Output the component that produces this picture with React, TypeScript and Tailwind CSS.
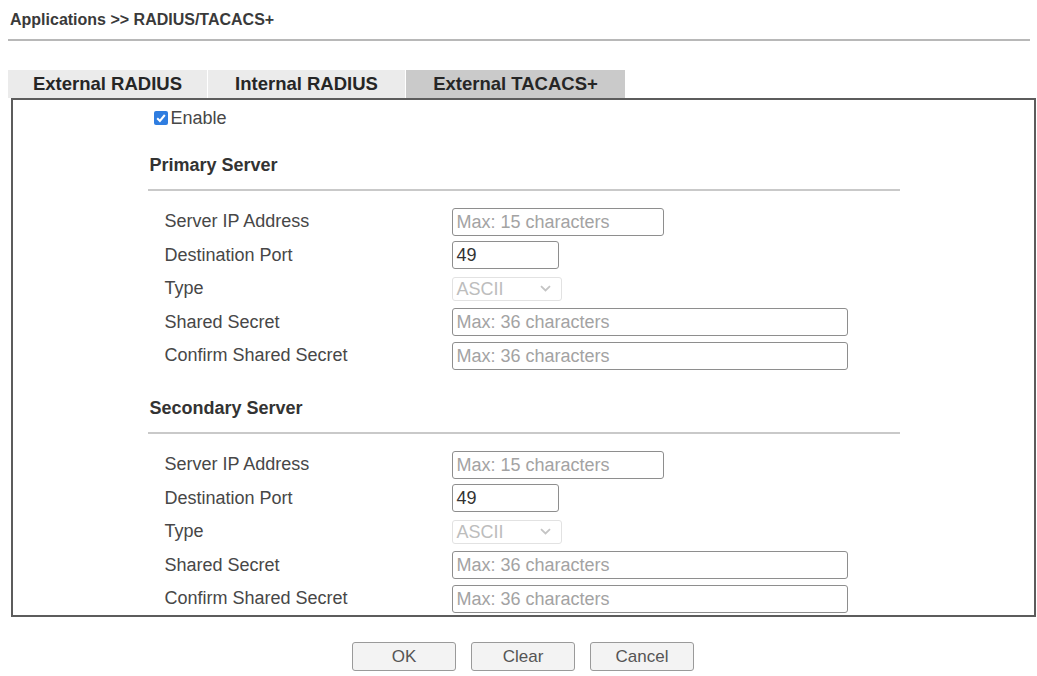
import React from "react";

type Row = { label: string; kind: "ip" | "port" | "type" | "secret" };

const rows: Row[] = [
  { label: "Server IP Address", kind: "ip" },
  { label: "Destination Port", kind: "port" },
  { label: "Type", kind: "type" },
  { label: "Shared Secret", kind: "secret" },
  { label: "Confirm Shared Secret", kind: "secret" },
];

function Field({ kind }: { kind: Row["kind"] }) {
  if (kind === "type") {
    return (
      <div className="flex h-[24px] w-[110px] items-center justify-between rounded-[3px] border border-[#e2e2e2] pl-[4px] pr-[10px] text-[18px] leading-none text-[#bdbdbd]">
        <span>ASCII</span>
        <svg width="11" height="7" viewBox="0 0 11 7" fill="none">
          <path d="M1 1.2 L5.5 5.5 L10 1.2" stroke="#c4c4c4" strokeWidth="1.8" />
        </svg>
      </div>
    );
  }
  const width = kind === "ip" ? "w-[212px]" : kind === "port" ? "w-[107px]" : "w-[396px]";
  const text =
    kind === "port" ? "49" : kind === "ip" ? "Max: 15 characters" : "Max: 36 characters";
  const color = kind === "port" ? "text-[#333]" : "text-[#a3a3a3]";
  return (
    <div
      className={`flex h-[28px] ${width} items-center rounded-[3px] border-[1.5px] border-[#8e8e8e] pl-[4px] text-[18px] leading-none ${color}`}
    >
      {text}
    </div>
  );
}

function ServerSection({ title, first }: { title: string; first: boolean }) {
  return (
    <div>
      <div
        className={`${first ? "mt-[23px]" : "mt-[23.5px]"} flex h-[24px] items-center pl-[2px] text-[18px] font-bold text-[#333]`}
      >
        {title}
      </div>
      <div className="mt-[12px] h-[2px] bg-[#c9c9c9]" />
      <div className="mt-[14px]">
        {rows.map((r) => (
          <div key={r.label} className="flex h-[33.5px] items-center">
            <div className="w-[304px] pl-[17px] text-[18px] text-[#474747]">{r.label}</div>
            <Field kind={r.kind} />
          </div>
        ))}
      </div>
    </div>
  );
}

export default function App() {
  return (
    <div className="h-[676px] w-[1037px] overflow-hidden bg-white font-['Liberation_Sans',Arial,sans-serif] text-[#333]">
      <div className="pl-[10px] pt-[10px] text-[16px] font-bold leading-[20px] text-[#3a3a3a]">
        Applications &gt;&gt; RADIUS/TACACS+
      </div>
      <div className="ml-[8px] mr-[7px] mt-[9px] h-[2px] bg-[#b8b8b8]" />

      {/* tab strip */}
      <div className="ml-[8px] mt-[29px] flex h-[28px] gap-[1px]">
        <div className="flex w-[199px] items-center justify-center bg-[#ebebeb] text-[18.5px] font-bold text-[#262626]">
          External RADIUS
        </div>
        <div className="flex w-[197px] items-center justify-center bg-[#ebebeb] text-[18.5px] font-bold text-[#262626]">
          Internal RADIUS
        </div>
        <div className="flex w-[219px] items-center justify-center bg-[#cacaca] text-[18.5px] font-bold text-[#262626]">
          External TACACS+
        </div>
      </div>

      {/* settings panel */}
      <div className="ml-[11px] box-border h-[519px] w-[1025px] border-2 border-[#5c5c5c]">
        <div className="mx-auto w-[752px]">
          <div className="mt-[6px] flex h-[24px] items-center pl-[6px] text-[18px] text-[#474747]">
            <span className="mr-[3px] flex h-[14px] w-[14px] shrink-0 items-center justify-center rounded-[2px] bg-[#2f7de0]">
              <svg width="12" height="12" viewBox="0 0 12 12" fill="none">
                <path d="M2.2 6.2 L4.9 8.9 L9.8 3" stroke="white" strokeWidth="2" />
              </svg>
            </span>
            Enable
          </div>
          <ServerSection title="Primary Server" first />
          <ServerSection title="Secondary Server" first={false} />
        </div>
      </div>

      {/* actions */}
      <div className="mt-[25px] flex justify-center gap-[15px] pl-[9px]">
        {["OK", "Clear", "Cancel"].map((b) => (
          <button
            key={b}
            className="h-[29px] w-[104px] rounded-[3px] border border-[#9a9a9a] bg-[#f3f3f3] text-[17px] text-[#555]"
          >
            {b}
          </button>
        ))}
      </div>
    </div>
  );
}
